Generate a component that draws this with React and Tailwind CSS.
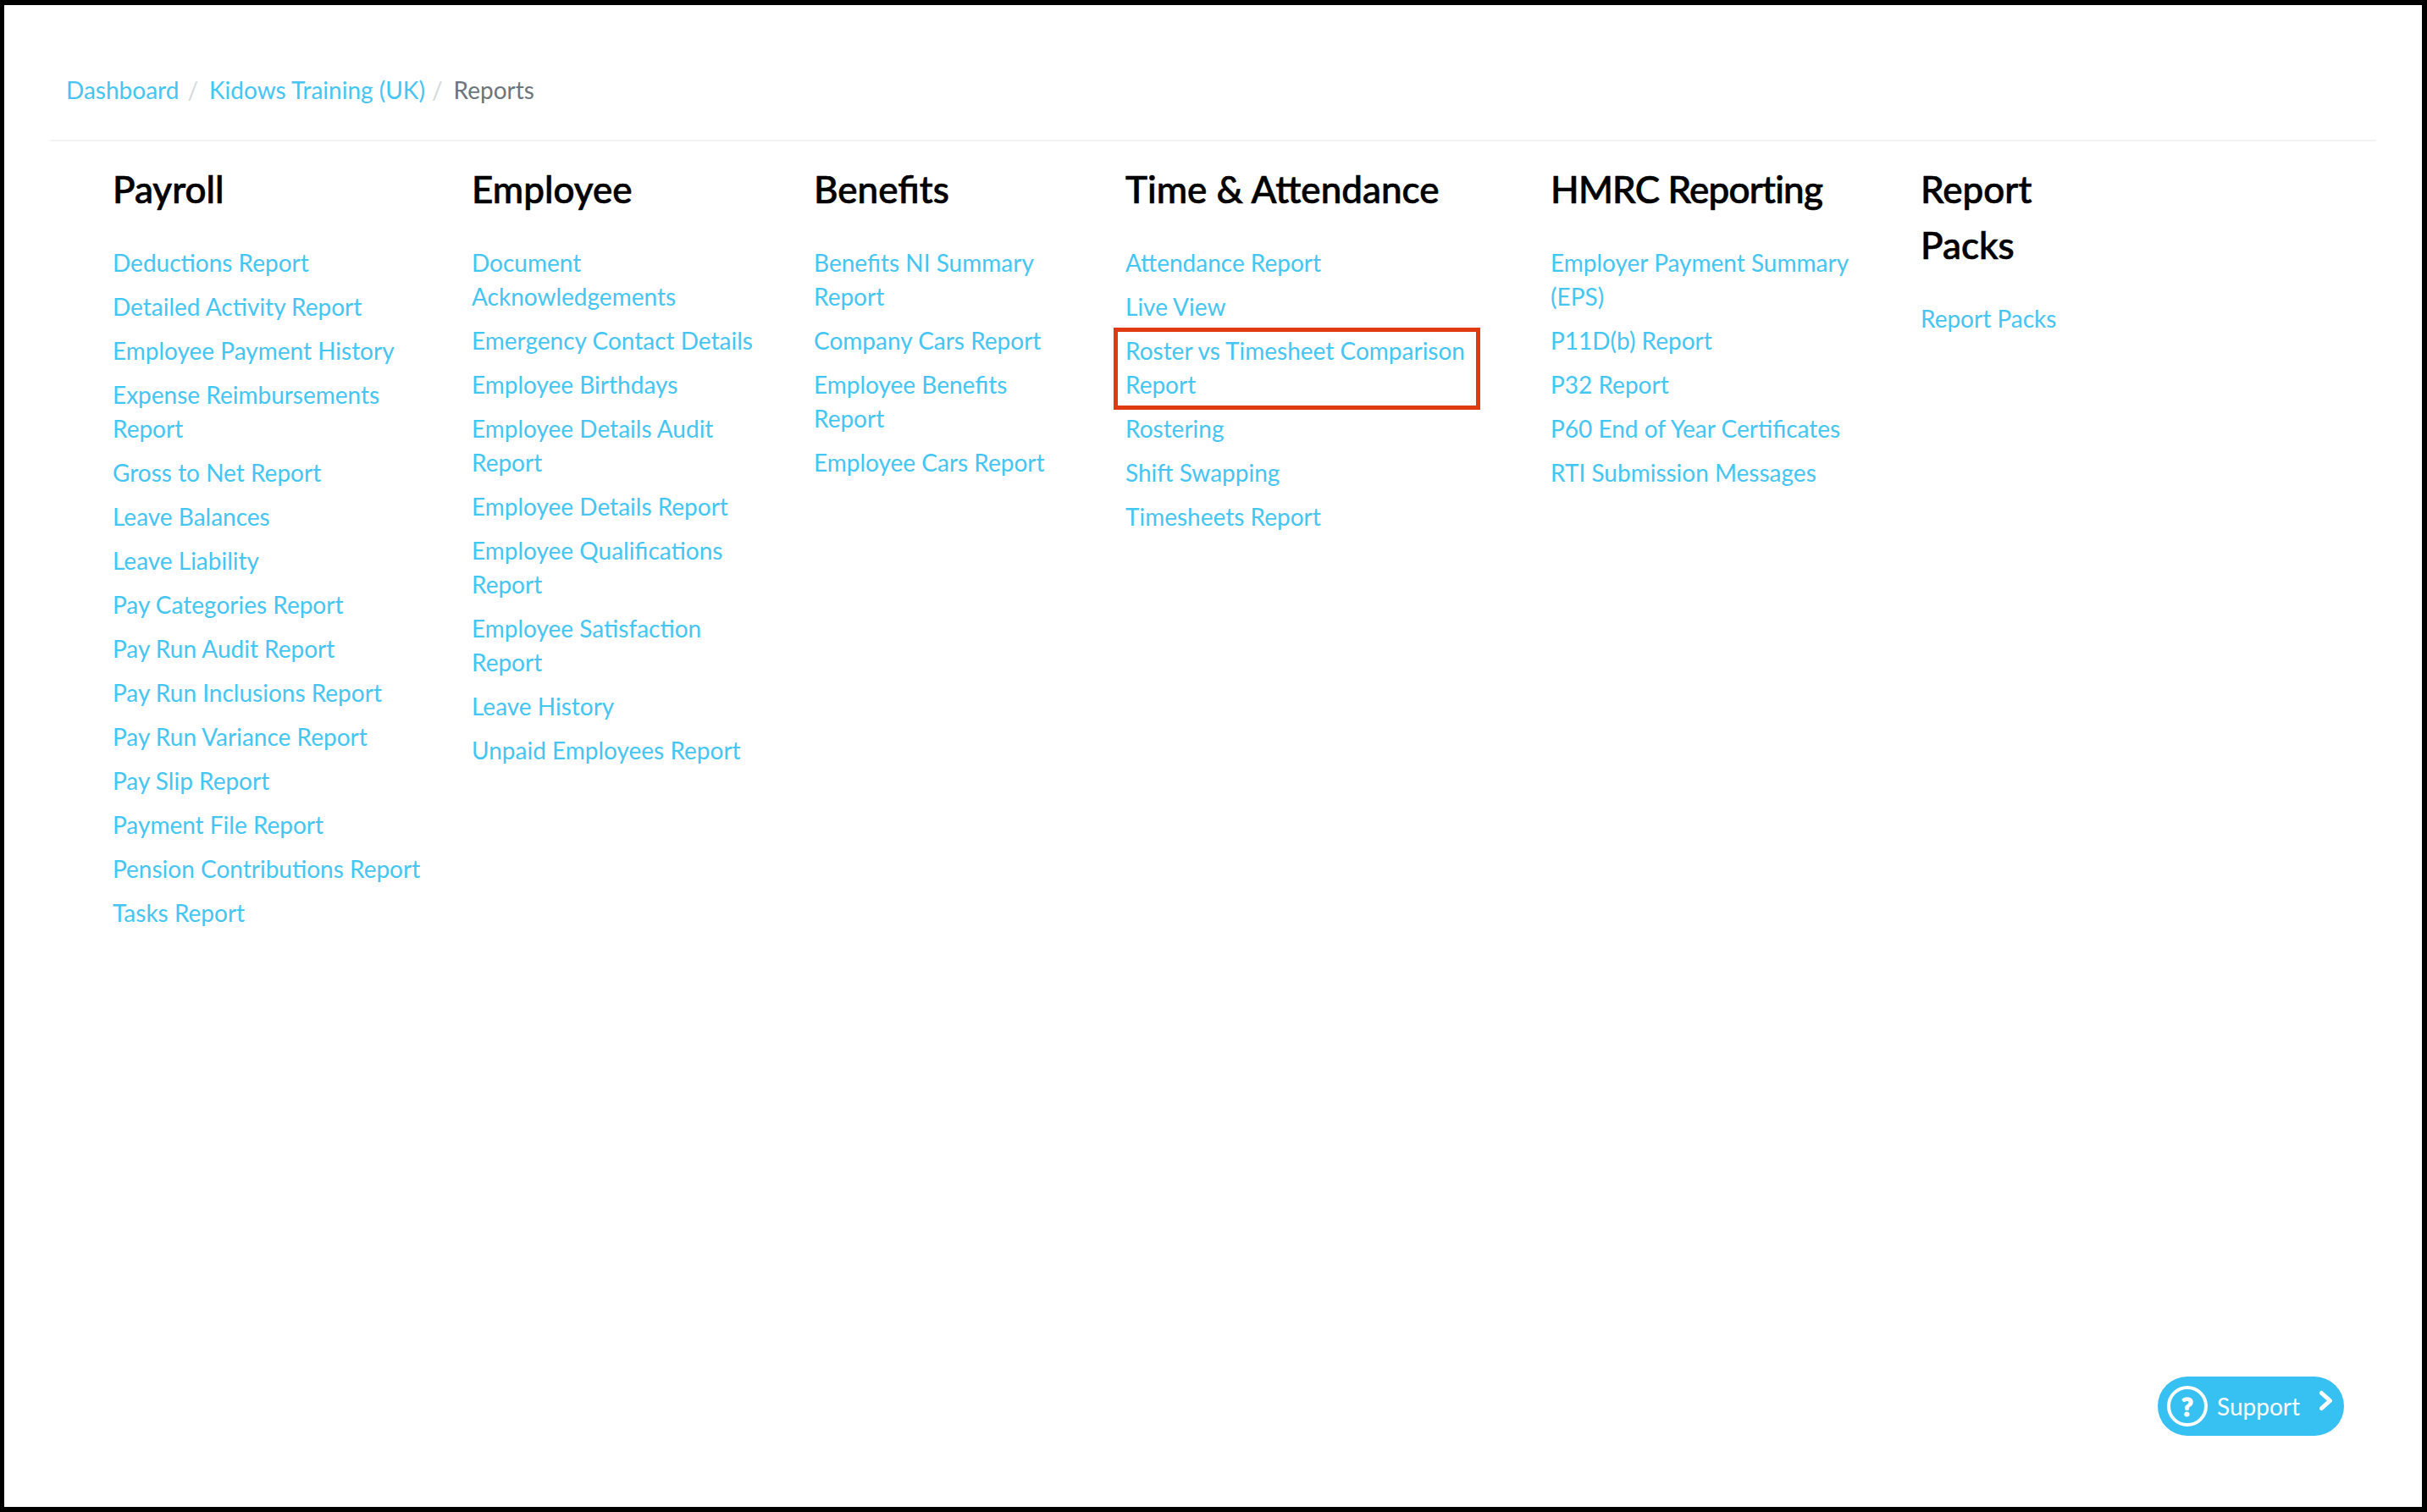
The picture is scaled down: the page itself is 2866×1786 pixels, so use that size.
const cols = [
  { title: 'Payroll', w: 'w-[424px]', inner: 'w-[370px]', links: ['Deductions Report','Detailed Activity Report','Employee Payment History','Expense Reimbursements Report','Gross to Net Report','Leave Balances','Leave Liability','Pay Categories Report','Pay Run Audit Report','Pay Run Inclusions Report','Pay Run Variance Report','Pay Slip Report','Payment File Report','Pension Contributions Report','Tasks Report'] },
  { title: 'Employee', w: 'w-[404px]', inner: 'w-[345px]', links: ['Document Acknowledgements','Emergency Contact Details','Employee Birthdays','Employee Details Audit Report','Employee Details Report','Employee Qualifications Report','Employee Satisfaction Report','Leave History','Unpaid Employees Report'] },
  { title: 'Benefits', w: 'w-[368px]', inner: 'w-[290px]', links: ['Benefits NI Summary Report','Company Cars Report','Employee Benefits Report','Employee Cars Report'] },
  { title: 'Time & Attendance', w: 'w-[502px]', inner: 'w-[420px]', links: ['Attendance Report','Live View','Roster vs Timesheet Comparison Report','Rostering','Shift Swapping','Timesheets Report'] },
  { title: 'HMRC Reporting', w: 'w-[437px]', inner: 'w-[370px] tracking-[-0.8px]', links: ['Employer Payment Summary (EPS)','P11D(b) Report','P32 Report','P60 End of Year Certificates','RTI Submission Messages'] },
  { title: 'Report Packs', w: 'w-[200px]', inner: 'w-[180px]', links: ['Report Packs'] },
];

export default function App() {
  return (
    <div className="relative h-[1786px] w-[2866px] overflow-hidden border-t-[6px] border-l-[5px] border-r-[6px] border-b-[6px] border-black bg-white font-['Lato','Liberation_Sans',sans-serif]">
      <div className="px-[54px] pt-[80px]">
        <nav className="flex h-[81px] items-start border-b-2 border-[#f1f3f4] pl-[19px] text-[28px] leading-[40px]">
          <a className="text-[#45c5f2]">Dashboard</a>
          <span className="ml-[10px] mr-[13px] text-[#d5d9dc]">/</span>
          <a className="text-[#45c5f2]">Kidows Training (UK)</a>
          <span className="ml-[8px] mr-[13px] text-[#d5d9dc]">/</span>
          <span className="text-[#6c757d]">Reports</span>
        </nav>
        <div className="flex pl-[74px] pt-[23px]">
          {cols.map((c) => (
            <section key={c.title} className={c.w}>
              <h2 className={`${c.inner} mb-[34px] text-[44px] font-medium leading-[66px] text-black [-webkit-text-stroke:0.7px_black]`}>{c.title}</h2>
              <ul className={`${c.inner} flex flex-col gap-[12px] tracking-normal`}>
                {c.links.map((l) => (
                  <li key={l} className="text-[28px] leading-[40px] text-[#45c5f2]">{l}</li>
                ))}
              </ul>
            </section>
          ))}
        </div>
      </div>
      <div className="absolute left-[1310px] top-[381px] h-[97px] w-[433px] border-[5px] border-[#e03a10]" />
      <div className="absolute left-[2543px] top-[1620px] flex h-[70px] w-[220px] items-center rounded-full bg-[#37c0f2] pl-[11px] text-white">
        <div className="flex h-[48px] w-[48px] items-center justify-center rounded-full border-[4px] border-white text-[30px] font-black leading-none [-webkit-text-stroke:1.2px_white]">?</div>
        <span className="ml-[11px] text-[28px] leading-none">Support</span>
        <svg className="absolute left-[190px] top-[15px]" width="20" height="30" viewBox="0 0 20 30" fill="none" stroke="white" strokeWidth="5" strokeLinecap="round" strokeLinejoin="round"><path d="M3.5 4.5 L13.5 13.5 L3.5 22.5" /></svg>
      </div>
    </div>
  );
}
